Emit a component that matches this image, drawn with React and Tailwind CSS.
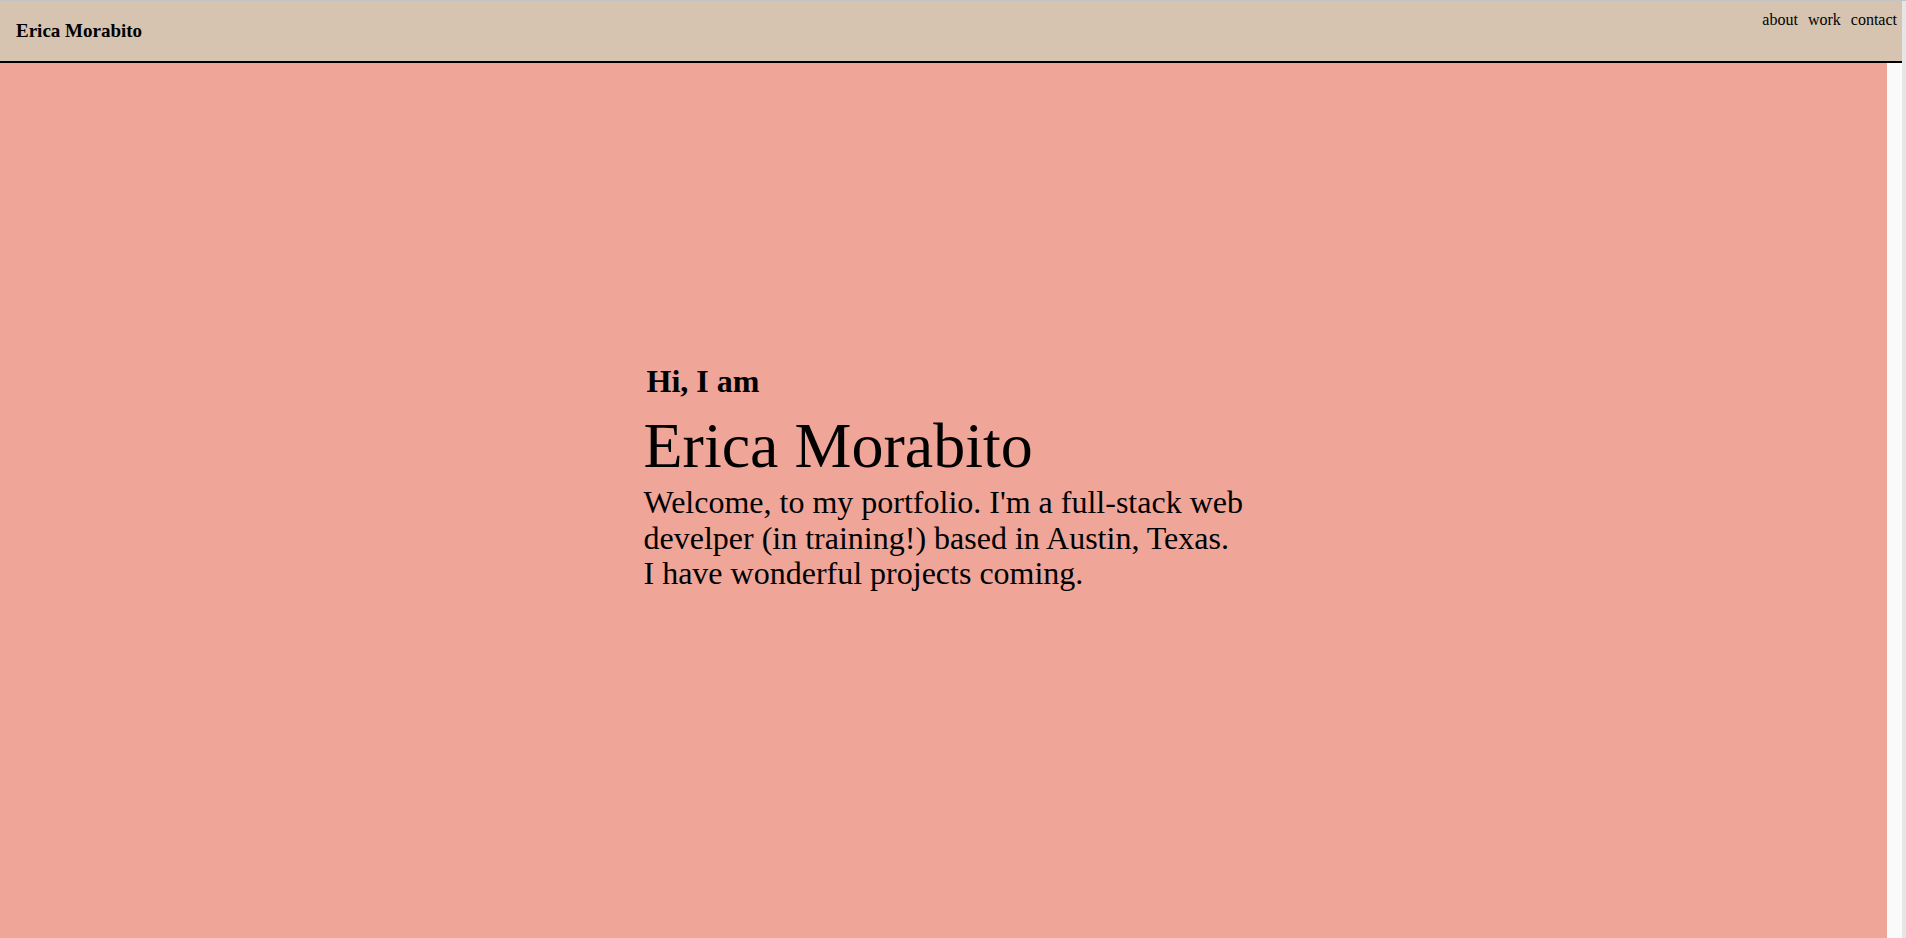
import React from 'react';

const links = ["about", "work", "contact"];

function Header() {
    return (
        <header className="flex h-[62px] w-full shrink-0 justify-between border-b-2 border-black bg-[#d6c4b0]">
            <h3 className="self-center pl-4 text-[19px] font-bold leading-[normal]">Erica Morabito</h3>
            <nav className="flex gap-[10px] self-start pr-[5px] pt-[10px] text-[16px] leading-[normal]">
                {links.map((link) => (
                    <a key={link} href={"#" + link} className="text-black">
                        {link}
                    </a>
                ))}
            </nav>
        </header>
    );
}

function Hero() {
    return (
        <section className="w-[1887px] flex-1 bg-[#efa598] pt-[300px]">
            <div className="mx-auto w-[600px]">
                <h1 className="pl-[3px] text-[32px] font-bold leading-[normal]">Hi, I am</h1>
                <h2 className="mt-[9px] text-[64px] leading-[normal]">Erica Morabito</h2>
                <p className="mt-[2px] whitespace-nowrap text-[32px] leading-[35.5px]">
                    Welcome, to my portfolio. I'm a full-stack web
                    <br />
                    develper (in training!) based in Austin, Texas.
                    <br />
                    I have wonderful projects coming.
                </p>
            </div>
        </section>
    );
}

export default function App() {
    return (
        <div className="flex h-screen overflow-hidden border-t border-[#c4c4c4] bg-[#fafafa] font-['Liberation_Serif',serif] text-black">
            <div className="flex flex-1 flex-col">
                <Header />
                <Hero />
            </div>
            <div className="w-[4px] bg-[#e6e6e6]" />
        </div>
    );
}
